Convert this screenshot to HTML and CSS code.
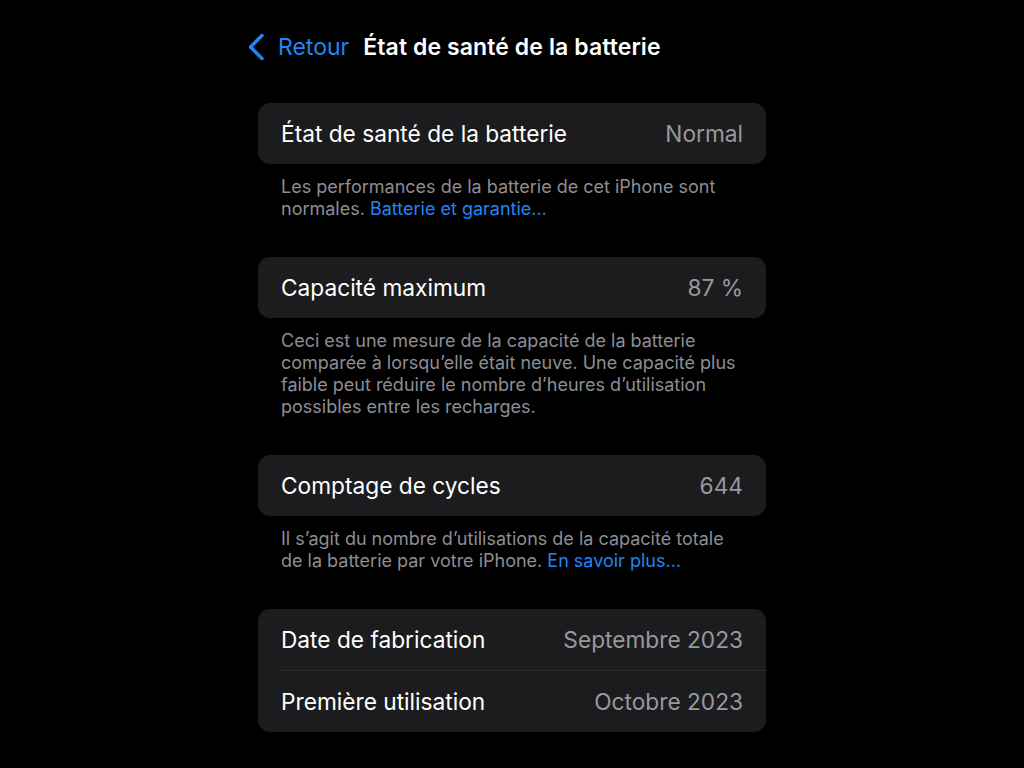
FILE: index.html
```html
<!DOCTYPE html>
<html lang="fr">
<head>
    <meta charset="UTF-8">
    <meta name="viewport" content="width=device-width, initial-scale=1.0">
    <title>État de santé de la batterie</title>
    <link rel="stylesheet" href="styles.css">
</head>
<body>
    <div class="page">
        <div class="nav">
            <a class="back" href="#">
                <svg class="chevron" width="18" height="28" viewBox="0 0 18 28">
                    <path d="M15 2.5 L3.5 14 L15 25.5" fill="none" stroke="#1f86f5" stroke-width="3.4" stroke-linecap="round" stroke-linejoin="round"/>
                </svg>
                <span>Retour</span>
            </a>
            <h1>État de santé de la batterie</h1>
        </div>

        <div class="section">
            <div class="card">
                <div class="row">
                    <span class="label">État de santé de la batterie</span>
                    <span class="value">Normal</span>
                </div>
            </div>
            <p class="note">Les performances de la batterie de cet iPhone sont<br>normales. <a href="#">Batterie et garantie…</a></p>
        </div>

        <div class="section">
            <div class="card">
                <div class="row">
                    <span class="label">Capacité maximum</span>
                    <span class="value">87 %</span>
                </div>
            </div>
            <p class="note">Ceci est une mesure de la capacité de la batterie<br>comparée à lorsqu’elle était neuve. Une capacité plus<br>faible peut réduire le nombre d’heures d’utilisation<br>possibles entre les recharges.</p>
        </div>

        <div class="section">
            <div class="card">
                <div class="row">
                    <span class="label">Comptage de cycles</span>
                    <span class="value">644</span>
                </div>
            </div>
            <p class="note">Il s’agit du nombre d’utilisations de la capacité totale<br>de la batterie par votre iPhone. <a href="#">En savoir plus…</a></p>
        </div>

        <div class="section">
            <div class="card">
                <div class="row">
                    <span class="label">Date de fabrication</span>
                    <span class="value">Septembre 2023</span>
                </div>
                <div class="row">
                    <span class="label">Première utilisation</span>
                    <span class="value">Octobre 2023</span>
                </div>
            </div>
        </div>
    </div>
</body>
</html>
```

FILE: styles.css
```css
body {
    margin: 0;
    padding: 0;
    background-color: #000;
    font-family: Inter, "Noto Sans", sans-serif;
    color: #fff;
}

.page {
    width: 508px;
    margin-left: 258px;
    padding-top: 29px;
}

.nav {
    display: flex;
    align-items: center;
    height: 36px;
    margin-left: -11px;
    margin-bottom: 38px;
}

.back {
    display: flex;
    align-items: center;
    color: #1f86f5;
    text-decoration: none;
    font-size: 23px;
    margin-right: 14px;
}

.chevron {
    margin-right: 13px;
}

h1 {
    margin: 0;
    font-size: 23px;
    font-weight: 600;
    letter-spacing: 0.1px;
    color: #fff;
}

.section {
    margin-bottom: 37px;
}

.card {
    background-color: #1c1c1e;
    border-radius: 12px;
    overflow: hidden;
}

.row {
    display: flex;
    justify-content: space-between;
    align-items: center;
    height: 61px;
    padding: 0 23px;
    font-size: 22.7px;
}

.row + .row {
    margin-left: 23px;
    padding-left: 0;
    border-top: 1px solid #2c2c2f;
}

.label {
    color: #fff;
}

.value {
    color: #98989e;
}

.note {
    margin: 0;
    padding: 12px 23px 0;
    font-size: 18px;
    line-height: 22px;
    color: #8d8d93;
}

.note a {
    color: #1f86f5;
    text-decoration: none;
}
```
